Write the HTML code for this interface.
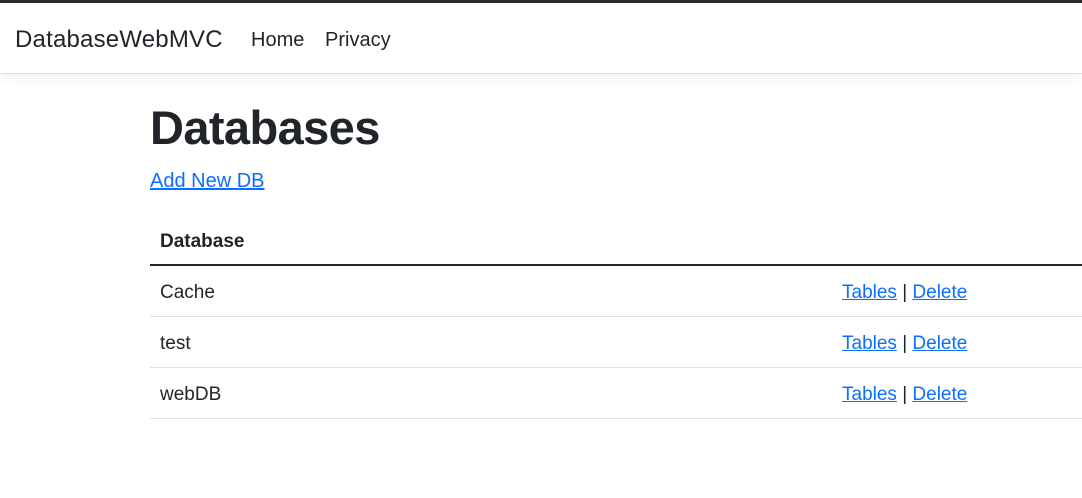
<!DOCTYPE html>
<html><head><style>
*{box-sizing:border-box;margin:0;padding:0}
body{width:1082px;height:498px;overflow:hidden;background:#fff;font-family:"Liberation Sans",sans-serif;color:#212529;border-top:3px solid #2b2b2b}
.nav{height:71px;border-bottom:1px solid #dee2e6;box-shadow:0 4px 12px rgba(0,0,0,.06);position:relative}
.nav span{position:absolute;top:26px;font-size:20px;color:#212529}
.brand{left:15px;font-size:24px!important;top:23px!important;letter-spacing:0.2px}
h1{position:absolute;left:150px;top:100px;font-size:47px;font-weight:bold;letter-spacing:-0.6px}
a{color:#0d6efd;text-decoration:underline}
.add{position:absolute;left:150px;top:170px;font-size:20px}
table{position:absolute;left:150px;top:216px;width:940px;border-collapse:collapse;font-size:19px}
th{text-align:left;font-weight:bold;height:49px;padding-left:10px;padding-top:4px;border-bottom:2px solid #212529}
td{height:51px;padding-left:10px;padding-top:5px;border-bottom:1px solid #dee2e6}
td.r{padding-left:0;width:248px}
</style></head><body>
<div class="nav"><span class="brand">DatabaseWebMVC</span><span style="left:251px">Home</span><span style="left:325px">Privacy</span></div>
<h1>Databases</h1>
<a class="add">Add New DB</a>
<table>
<tr><th>Database</th><th></th></tr>
<tr><td>Cache</td><td class="r"><a>Tables</a> | <a>Delete</a></td></tr>
<tr><td>test</td><td class="r"><a>Tables</a> | <a>Delete</a></td></tr>
<tr><td>webDB</td><td class="r"><a>Tables</a> | <a>Delete</a></td></tr>
</table>
</body></html>
